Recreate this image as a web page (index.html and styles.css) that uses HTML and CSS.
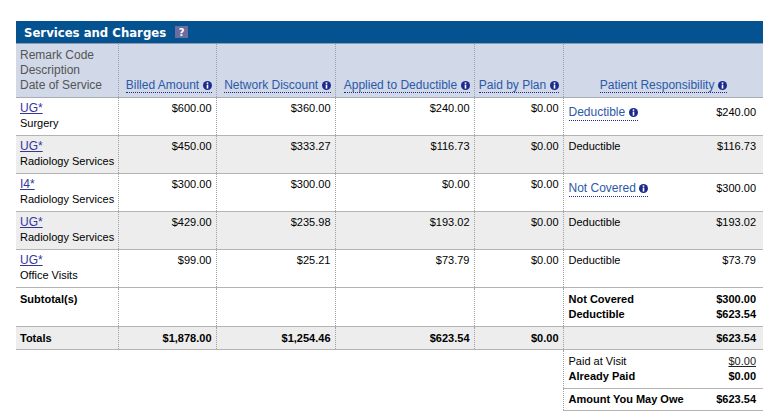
FILE: index.html
```html
<!DOCTYPE html>
<html>
<head>
<meta charset="utf-8">
<title>Services and Charges</title>
<link rel="stylesheet" href="styles.css">
</head>
<body>
<div class="panel">
  <div class="title">Services and Charges <span class="help">?</span></div>
  <table class="charges">
    <colgroup>
      <col class="c1"><col class="c2"><col class="c3"><col class="c4"><col class="c5"><col class="c6">
    </colgroup>
    <thead>
      <tr>
        <th class="first">Remark Code<br>Description<br>Date of Service</th>
        <th class="num"><span class="hlink">Billed Amount <svg class="info" viewBox="0 0 9 9"><circle cx="4.5" cy="4.5" r="4.5"/><rect x="3.7" y="1.4" width="1.6" height="1.5"/><rect x="3.7" y="3.6" width="1.6" height="4"/></svg></span></th>
        <th class="num"><span class="hlink">Network Discount <svg class="info" viewBox="0 0 9 9"><circle cx="4.5" cy="4.5" r="4.5"/><rect x="3.7" y="1.4" width="1.6" height="1.5"/><rect x="3.7" y="3.6" width="1.6" height="4"/></svg></span></th>
        <th class="num"><span class="hlink">Applied to Deductible <svg class="info" viewBox="0 0 9 9"><circle cx="4.5" cy="4.5" r="4.5"/><rect x="3.7" y="1.4" width="1.6" height="1.5"/><rect x="3.7" y="3.6" width="1.6" height="4"/></svg></span></th>
        <th class="num"><span class="hlink">Paid by Plan <svg class="info" viewBox="0 0 9 9"><circle cx="4.5" cy="4.5" r="4.5"/><rect x="3.7" y="1.4" width="1.6" height="1.5"/><rect x="3.7" y="3.6" width="1.6" height="4"/></svg></span></th>
        <th class="center"><span class="hlink">Patient Responsibility <svg class="info" viewBox="0 0 9 9"><circle cx="4.5" cy="4.5" r="4.5"/><rect x="3.7" y="1.4" width="1.6" height="1.5"/><rect x="3.7" y="3.6" width="1.6" height="4"/></svg></span></th>
      </tr>
    </thead>
    <tbody>
      <tr class="item">
        <td><a class="code" href="#">UG*</a><div class="desc">Surgery</div></td>
        <td class="num">$600.00</td>
        <td class="num">$360.00</td>
        <td class="num">$240.00</td>
        <td class="num">$0.00</td>
        <td class="resp"><div class="pair linked"><span class="hlink">Deductible <svg class="info" viewBox="0 0 9 9"><circle cx="4.5" cy="4.5" r="4.5"/><rect x="3.7" y="1.4" width="1.6" height="1.5"/><rect x="3.7" y="3.6" width="1.6" height="4"/></svg></span><span>$240.00</span></div></td>
      </tr>
      <tr class="item alt">
        <td><a class="code" href="#">UG*</a><div class="desc">Radiology Services</div></td>
        <td class="num">$450.00</td>
        <td class="num">$333.27</td>
        <td class="num">$116.73</td>
        <td class="num">$0.00</td>
        <td class="resp"><div class="pair"><span>Deductible</span><span>$116.73</span></div></td>
      </tr>
      <tr class="item">
        <td><a class="code" href="#">I4*</a><div class="desc">Radiology Services</div></td>
        <td class="num">$300.00</td>
        <td class="num">$300.00</td>
        <td class="num">$0.00</td>
        <td class="num">$0.00</td>
        <td class="resp"><div class="pair linked"><span class="hlink">Not Covered <svg class="info" viewBox="0 0 9 9"><circle cx="4.5" cy="4.5" r="4.5"/><rect x="3.7" y="1.4" width="1.6" height="1.5"/><rect x="3.7" y="3.6" width="1.6" height="4"/></svg></span><span>$300.00</span></div></td>
      </tr>
      <tr class="item alt">
        <td><a class="code" href="#">UG*</a><div class="desc">Radiology Services</div></td>
        <td class="num">$429.00</td>
        <td class="num">$235.98</td>
        <td class="num">$193.02</td>
        <td class="num">$0.00</td>
        <td class="resp"><div class="pair"><span>Deductible</span><span>$193.02</span></div></td>
      </tr>
      <tr class="item">
        <td><a class="code" href="#">UG*</a><div class="desc">Office Visits</div></td>
        <td class="num">$99.00</td>
        <td class="num">$25.21</td>
        <td class="num">$73.79</td>
        <td class="num">$0.00</td>
        <td class="resp"><div class="pair"><span>Deductible</span><span>$73.79</span></div></td>
      </tr>
      <tr class="subtotal">
        <td>Subtotal(s)</td>
        <td></td><td></td><td></td><td></td>
        <td class="resp"><div class="pair"><span>Not Covered</span><span>$300.00</span></div><div class="pair"><span>Deductible</span><span>$623.54</span></div></td>
      </tr>
      <tr class="totals">
        <td>Totals</td>
        <td class="num">$1,878.00</td>
        <td class="num">$1,254.46</td>
        <td class="num">$623.54</td>
        <td class="num">$0.00</td>
        <td class="resp"><div class="pair"><span></span><span>$623.54</span></div></td>
      </tr>
      <tr class="paid">
        <td class="blank" colspan="5"></td>
        <td class="resp"><div class="pair"><span>Paid at Visit</span><a class="paylink" href="#">$0.00</a></div><div class="pair strong"><span>Already Paid</span><span>$0.00</span></div></td>
      </tr>
      <tr class="owe">
        <td class="blank" colspan="5"></td>
        <td class="resp"><div class="pair"><span>Amount You May Owe</span><span>$623.54</span></div></td>
      </tr>
    </tbody>
  </table>
</div>
</body>
</html>
```

FILE: styles.css
```css
body {
  margin: 0;
  background: #fff;
  font-family: "Liberation Sans", Arial, sans-serif;
  font-size: 11px;
  color: #000;
}

.panel {
  width: 747px;
  margin: 21px 0 0 16px;
}

.title {
  display: flex;
  align-items: center;
  height: 22px;
  padding-left: 8px;
  background: #04528f;
  border-bottom: 1px solid #8c9bb2;
  color: #fff;
  font-family: "DejaVu Sans Condensed", "DejaVu Sans", Verdana, sans-serif;
  font-stretch: condensed;
  font-weight: bold;
  font-size: 13px;
  white-space: pre;
}

.help {
  display: inline-flex;
  align-items: center;
  justify-content: center;
  width: 13px;
  height: 12px;
  margin-left: 5px;
  background: #6c6c9e;
  color: #fff;
  font-size: 11px;
  font-weight: bold;
}

.charges {
  width: 747px;
  border-collapse: collapse;
  table-layout: fixed;
}

.c1 { width: 102px; }
.c2 { width: 98px; }
.c3 { width: 119px; }
.c4 { width: 139px; }
.c5 { width: 89px; }
.c6 { width: 200px; }

th {
  background: #d1d8e8;
  font-weight: normal;
  font-size: 12px;
  line-height: 15px;
  vertical-align: bottom;
  padding: 4px 4px 4px 4px;
  border-bottom: 1px solid #a9adb3;
  border-left: 1px dotted #a0a0a0;
}

th.first {
  text-align: left;
  color: #555;
  border-left: none;
}

th.num { text-align: right; }
th.center { text-align: center; }

.hlink {
  color: #2a5aa8;
  border-bottom: 1px dotted #1c2a8c;
  white-space: nowrap;
}

.info {
  width: 9px;
  height: 9px;
  fill: #1c2a8c;
  vertical-align: -1px;
}

.info rect { fill: #fff; }

td {
  vertical-align: top;
  line-height: 15px;
  padding: 3px 4px 4px 4px;
  border-bottom: 1px solid #b4b4b4;
  border-left: 1px dotted #a0a0a0;
}

td:first-child { border-left: none; }

td.num { text-align: right; }

tr.alt td, tr.totals td { background: #ecedec; }

.code {
  color: #35359b;
  font-size: 12px;
  text-decoration: underline;
}

.desc {
  font-size: 11px;
  white-space: nowrap;
}

td.resp { padding: 3px 7px 4px 5px; }

.pair {
  display: flex;
  justify-content: space-between;
  align-items: baseline;
}

.pair.linked {
  margin-top: 4px;
  font-size: 11px;
}

.pair.linked .hlink { font-size: 12px; }

tr.subtotal td {
  font-weight: bold;
  padding-top: 4px;
}

tr.totals td {
  font-weight: bold;
  padding-top: 4px;
  padding-bottom: 3px;
}

tr.paid td, tr.owe td {
  border-bottom: none;
}

td.blank {
  border: none;
  background: none;
}

tr.paid td.resp {
  padding-top: 4px;
  border-bottom: 1px solid #b4b4b4;
  border-left: 1px dotted #a0a0a0;
}

.pair.strong { font-weight: bold; }

.paylink {
  color: #222;
  text-decoration: underline;
}

tr.owe td.resp {
  font-weight: bold;
  padding-top: 3px;
  padding-bottom: 3px;
  border-bottom: 1px solid #b4b4b4;
  border-left: 1px dotted #a0a0a0;
}
```
